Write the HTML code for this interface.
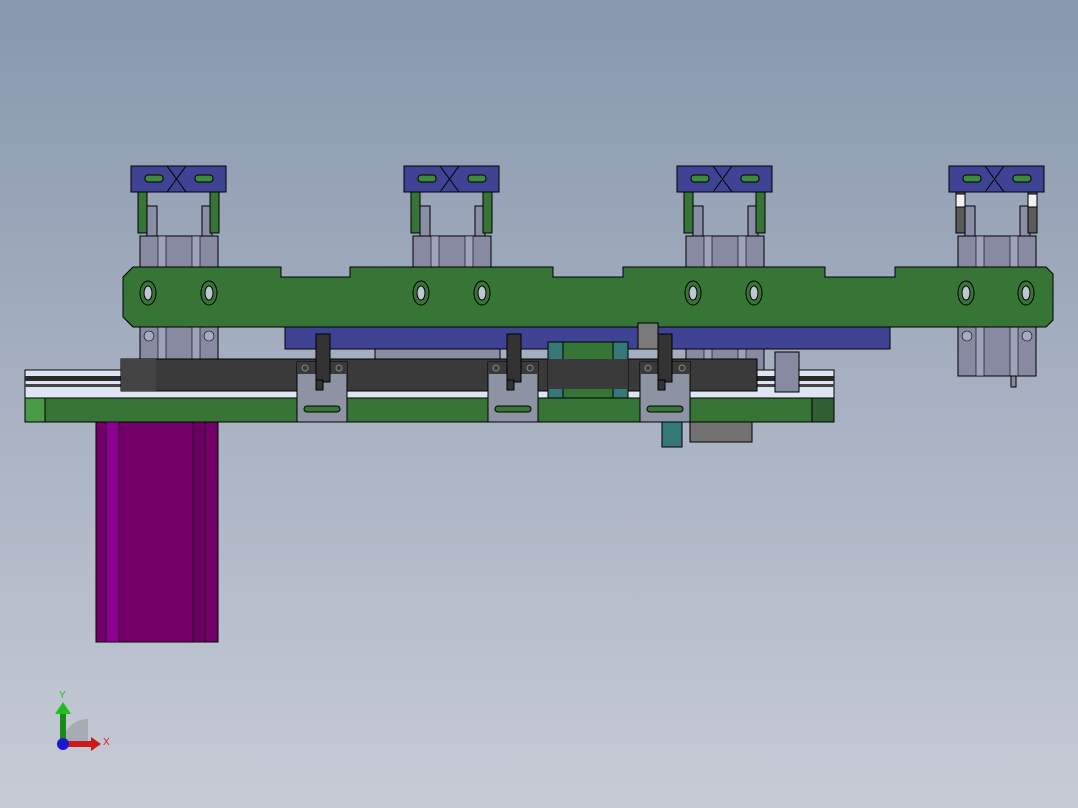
<!DOCTYPE html>
<html><head><style>body{margin:0}svg{display:block}</style></head><body>
<svg width="1078" height="808" viewBox="0 0 1078 808" xmlns="http://www.w3.org/2000/svg" font-family="Liberation Sans, sans-serif">
<defs>
<linearGradient id="bg" x1="0" y1="0" x2="0" y2="1"><stop offset="0" stop-color="#8898ad"/><stop offset="1" stop-color="#c7cbd6"/></linearGradient>
<g id="body">
 <rect x="131" y="166" width="95" height="26" fill="#3f4393" stroke="#000"/>
 <path d="M167 166 L186 192 M186 166 L167 192" stroke="#000"/>
 <rect x="145" y="175" width="18" height="7" rx="3" fill="#3d8a3a" stroke="#000"/>
 <rect x="195" y="175" width="18" height="7" rx="3" fill="#3d8a3a" stroke="#000"/>
 <rect x="147" y="206" width="10" height="32" fill="#8a8ea6" stroke="#000"/>
 <rect x="202" y="206" width="10" height="32" fill="#8a8ea6" stroke="#000"/>
 <rect x="140" y="236" width="78" height="140" fill="#878aa0" stroke="#000"/>
 <rect x="158" y="236" width="8" height="140" fill="#9ea2ba" stroke="#000" stroke-width=".6"/>
 <rect x="192" y="236" width="8" height="140" fill="#9ea2ba" stroke="#000" stroke-width=".6"/>
 <circle cx="149" cy="336" r="5" fill="#a7abc0" stroke="#000" stroke-width=".6"/>
 <circle cx="209" cy="336" r="5" fill="#a7abc0" stroke="#000" stroke-width=".6"/>
</g>
<g id="grip">
 <use href="#body"/>
 <rect x="138" y="192" width="9" height="41" fill="#377536" stroke="#000"/>
 <rect x="210" y="192" width="9" height="41" fill="#377536" stroke="#000"/>
</g>
<g id="grip4">
 <use href="#body"/>
 <rect x="138" y="192" width="9" height="41" fill="#5c5c5c" stroke="#000"/>
 <rect x="138" y="194" width="9" height="13" fill="#f0f0f0" stroke="#000"/>
 <rect x="210" y="192" width="9" height="41" fill="#5c5c5c" stroke="#000"/>
 <rect x="210" y="194" width="9" height="13" fill="#f0f0f0" stroke="#000"/>
 <rect x="193" y="376" width="5" height="11" fill="#878aa0" stroke="#000"/>
</g>
<g id="hole"><ellipse cx="0" cy="0" rx="8" ry="12" fill="#377536" stroke="#000"/><ellipse cx="0" cy="0" rx="4" ry="7" fill="#c0c4d4" stroke="#000"/></g>
<g id="slide"><rect x="0" y="0" width="50" height="60" fill="#8d93a2" stroke="#000"/><rect x="0" y="0" width="50" height="12" fill="#3a3a3a"/><circle cx="8" cy="6" r="3" fill="none" stroke="#888"/><circle cx="42" cy="6" r="3" fill="none" stroke="#888"/><rect x="7" y="44" width="36" height="6" rx="3" fill="#377536" stroke="#000"/></g>
</defs>
<rect width="1078" height="808" fill="url(#bg)"/>
<use href="#grip"/><use href="#grip" x="273"/><use href="#grip" x="546"/><use href="#grip4" x="818"/>
<rect x="285" y="323" width="605" height="26" fill="#3f4393" stroke="#000"/>
<path d="M133 267 H281 V277 H350 V267 H553 V277 H623 V267 H825 V277 H895 V267 H1046 L1053 274 V320 L1046 327 H133 L123 317 V277 Z" fill="#377536" stroke="#000"/>
<use href="#hole" x="148" y="293"/><use href="#hole" x="209" y="293"/>
<use href="#hole" x="421" y="293"/><use href="#hole" x="482" y="293"/>
<use href="#hole" x="693" y="293"/><use href="#hole" x="754" y="293"/>
<use href="#hole" x="966" y="293"/><use href="#hole" x="1026" y="293"/>
<rect x="375" y="349" width="125" height="12" fill="#8a8ea2" stroke="#000"/>
<rect x="25" y="370" width="809" height="28" fill="#dfe4f2" stroke="#000"/>
<rect x="25" y="376" width="809" height="5" fill="#2a2a2a"/><rect x="25" y="384" width="809" height="3" fill="#444"/>
<rect x="775" y="352" width="24" height="40" fill="#878aa0" stroke="#000"/>
<rect x="25" y="398" width="809" height="24" fill="#377536" stroke="#000"/>
<rect x="25" y="398" width="20" height="24" fill="#4a9a48" stroke="#000"/>
<rect x="812" y="398" width="22" height="24" fill="#2f5f33" stroke="#000"/>
<rect x="121" y="359" width="636" height="32" fill="#3a3a3a" stroke="#000"/>
<rect x="121" y="359" width="35" height="32" fill="#444"/>
<rect x="548" y="342" width="80" height="56" fill="#367878" stroke="#000"/>
<rect x="563" y="342" width="50" height="56" fill="#377536" stroke="#000"/>
<rect x="548" y="359" width="80" height="30" fill="#3a3a3a"/>
<rect x="638" y="323" width="20" height="26" fill="#7a7a7a" stroke="#000"/>
<use href="#slide" x="297" y="362"/><use href="#slide" x="488" y="362"/><use href="#slide" x="640" y="362"/>
<rect x="316" y="334" width="14" height="48" fill="#333" stroke="#000"/><rect x="316" y="380" width="7" height="10" fill="#333" stroke="#000"/>
<rect x="507" y="334" width="14" height="48" fill="#333" stroke="#000"/><rect x="507" y="380" width="7" height="10" fill="#333" stroke="#000"/>
<rect x="658" y="334" width="14" height="48" fill="#333" stroke="#000"/><rect x="658" y="380" width="7" height="10" fill="#333" stroke="#000"/>
<rect x="690" y="422" width="62" height="20" fill="#727272" stroke="#000"/>
<rect x="662" y="422" width="20" height="25" fill="#367878" stroke="#000"/>
<rect x="96" y="422" width="122" height="220" fill="#720068" stroke="#000"/>
<rect x="106" y="422" width="13" height="220" fill="#8c0090" stroke="#000" stroke-width=".6"/>
<rect x="193" y="422" width="12" height="220" fill="#6a0060" stroke="#000" stroke-width=".6"/>
<path d="M62 745 A26 26 0 0 1 88 719 V745 Z" fill="#a0a4aa" opacity=".8"/>
<rect x="60" y="712" width="6" height="32" fill="#1a8a1a"/><path d="M55 714 L63 702 L71 714 Z" fill="#1fbf1f"/>
<rect x="64" y="741" width="28" height="6" fill="#cc1a1a"/><path d="M91 737 L101 744 L91 751 Z" fill="#cc1a1a"/>
<circle cx="63" cy="744" r="6" fill="#1a1acc"/>
<text x="59" y="698" font-size="10" fill="#1fbf1f">Y</text>
<text x="103" y="745" font-size="10" fill="#e01a1a">X</text>
</svg>
</body></html>
